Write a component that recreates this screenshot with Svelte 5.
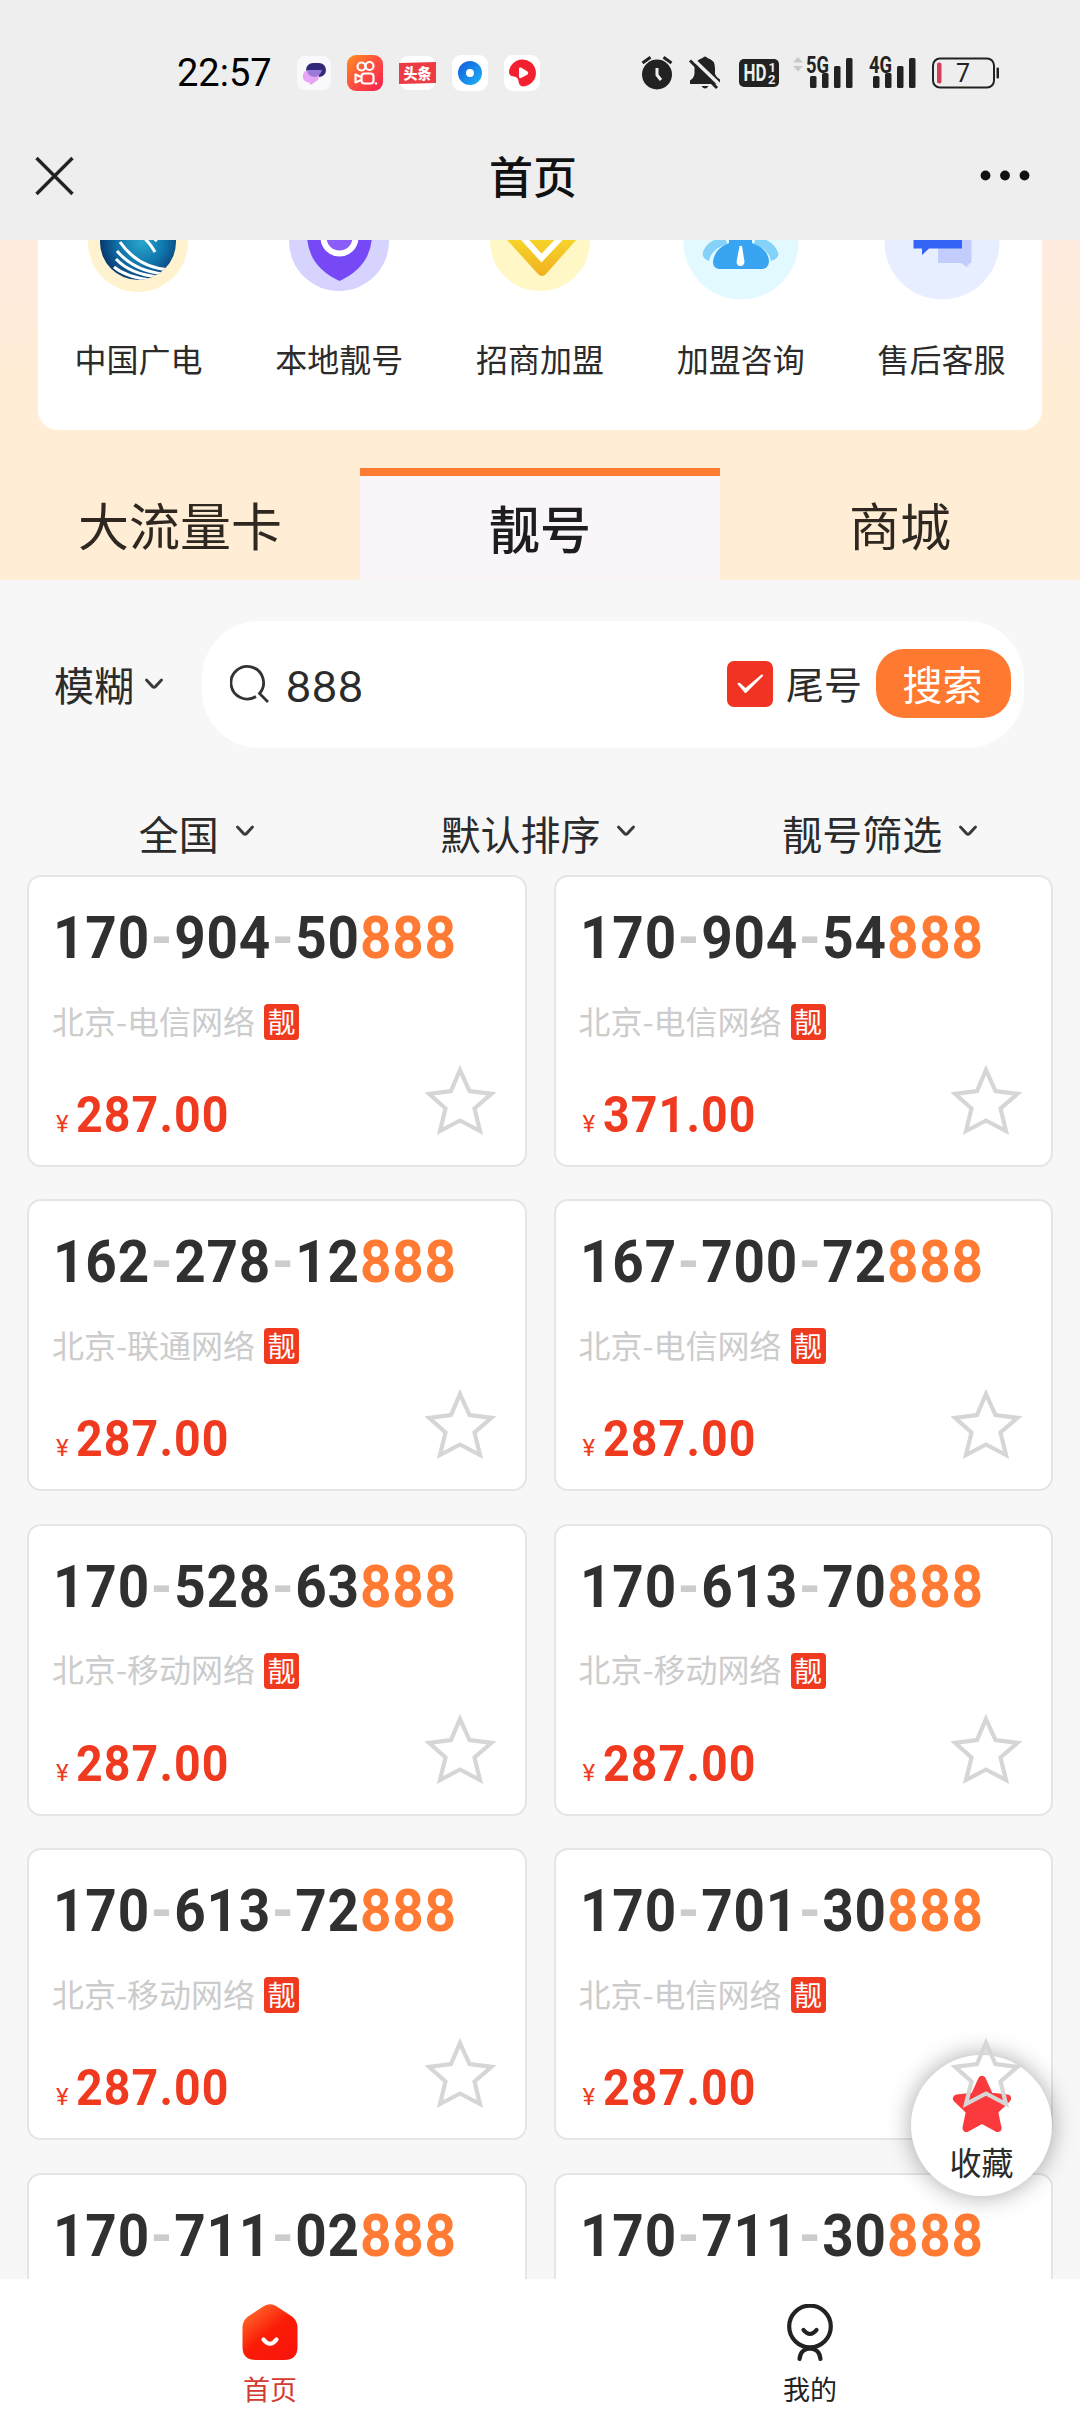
<script>
  const services = [
    { id: 'cbn', name: '中国广电' },
    { id: 'local', name: '本地靓号' },
    { id: 'join', name: '招商加盟' },
    { id: 'consult', name: '加盟咨询' },
    { id: 'support', name: '售后客服' }
  ];

  const filters = ['全国', '默认排序', '靓号筛选'];

  const numbers = [
    { parts: ['170', '904', '50'], carrier: '电信', price: '287.00' },
    { parts: ['170', '904', '54'], carrier: '电信', price: '371.00' },
    { parts: ['162', '278', '12'], carrier: '联通', price: '287.00' },
    { parts: ['167', '700', '72'], carrier: '电信', price: '287.00' },
    { parts: ['170', '528', '63'], carrier: '移动', price: '287.00' },
    { parts: ['170', '613', '70'], carrier: '移动', price: '287.00' },
    { parts: ['170', '613', '72'], carrier: '移动', price: '287.00' },
    { parts: ['170', '701', '30'], carrier: '电信', price: '287.00' },
    { parts: ['170', '711', '02'], carrier: '电信', price: '287.00' },
    { parts: ['170', '711', '30'], carrier: '电信', price: '287.00' }
  ];

  let keyword = '888';
</script>

{#snippet chevron()}
  <svg class="chevron" width="20" height="14" viewBox="0 0 20 14">
    <path d="M2.500 3 L8.600 9.600 Q10 10.800 11.400 9.600 L17.500 3" fill="none" stroke="#3a3a3a" stroke-width="2.900" stroke-linecap="round" />
  </svg>
{/snippet}

{#snippet signal(label)}
  <svg width="48" height="36" viewBox="0 0 48 36">
    <text x="0" y="17.500" class="net" textLength="23" lengthAdjust="spacingAndGlyphs">{label}</text>
    <g fill="#222">
      <rect x="4" y="21" width="6.500" height="12" rx="1.500" />
      <rect x="16" y="18" width="6.500" height="15" rx="1.500" />
      <rect x="28" y="11" width="6.500" height="22" rx="1.500" />
      <rect x="40" y="3" width="6.500" height="30" rx="1.500" />
    </g>
  </svg>
{/snippet}

<div class="phone">
  <header>
    <div class="status">
      <span class="time">22:57</span>
      <div class="apps">
        <svg width="34" height="36" viewBox="0 0 34 36">
          <rect x="0" y="1" width="34" height="34" rx="8" fill="#f9f8fb" />
          <rect x="9" y="8" width="20" height="14" rx="7" fill="#302a78" />
          <path d="M12 15 H18 A6.500 6.500 0 0 1 18 27 L14 30 L12 27.500 A6.200 6.200 0 0 1 12 15 Z" fill="#e7a6f5" />
          <path d="M12 15 H25 Q23 22 17 22 Q11 21 10 15.500 Z" fill="#9a79d8" />
        </svg>
        <svg width="36" height="36" viewBox="0 0 36 36">
          <defs>
            <linearGradient id="ks" x1="0" y1="0" x2="1" y2="1">
              <stop offset="0" stop-color="#ff8f1c" />
              <stop offset=".5" stop-color="#ff4e41" />
              <stop offset="1" stop-color="#f51f4d" />
            </linearGradient>
          </defs>
          <rect width="36" height="36" rx="9" fill="url(#ks)" />
          <g fill="none" stroke="#fff" stroke-width="2.200">
            <circle cx="14.500" cy="11.500" r="4" />
            <circle cx="22.500" cy="11" r="4" />
            <rect x="14.500" y="18.500" width="12" height="10" rx="3" />
            <path d="M14 22 L8.500 19.500 V27.500 L14 25" stroke-linejoin="round" />
          </g>
          <circle cx="29" cy="28.500" r="1.200" fill="#fff" />
        </svg>
        <svg width="37" height="36" viewBox="0 0 37 36">
          <rect x="1" y="1" width="35" height="34" rx="8" fill="#fff" />
          <path d="M0 8 L37 7 V28 L0 29 Z" fill="#ee3a43" />
          <text x="18.500" y="23.500" class="toutiao" textLength="28" lengthAdjust="spacingAndGlyphs">头条</text>
        </svg>
        <svg width="36" height="36" viewBox="0 0 36 36">
          <defs>
            <linearGradient id="br" x1="0" y1="0" x2="1" y2="1">
              <stop offset="0" stop-color="#1468e0" />
              <stop offset="1" stop-color="#1ba6f2" />
            </linearGradient>
          </defs>
          <rect width="36" height="36" rx="9" fill="#fff" />
          <circle cx="18" cy="18" r="8" fill="none" stroke="url(#br)" stroke-width="8" />
        </svg>
        <svg width="36" height="36" viewBox="0 0 36 36">
          <rect width="36" height="36" rx="9" fill="#fff" />
          <path d="M5 17 A13.500 13.500 0 1 1 22 31 Q15 33 14.500 26 Q14 22 10 21.500 Q5 21 5 17 Z" fill="#f3202f" />
          <path d="M15 13.500 Q15 12 17 12.600 L23.500 16.500 Q25 18 23.500 19.500 L17 23 Q15 23.500 15 22 Z" fill="#fff" />
        </svg>
      </div>
      <div class="indicators">
        <svg class="alarm" width="32" height="36" viewBox="0 0 32 36">
          <g stroke="#222" stroke-width="3" fill="none">
            <path d="M1.500 8 L9.500 2.200 M30.500 8 L22.500 2.200" />
          </g>
          <circle cx="16" cy="19.500" r="15" fill="#222" />
          <path d="M16 13 V20 L20 25" fill="none" stroke="#eee" stroke-width="3" />
        </svg>
        <svg class="bell" width="32" height="36" viewBox="0 0 32 36">
          <path d="M13.500 3 Q16 0 18.500 3 Q26 5 26 13 V19 Q27 22 31 24.500 V29 H1 V25.500 Q5.500 22.500 5.500 18 V13 Q6 5 13.500 3 Z" fill="#222" />
          <path d="M12.500 31 H19.500 Q16 36 12.500 31 Z" fill="#222" />
          <path d="M4 4 L32 31" stroke="#eee" stroke-width="3.500" />
          <path d="M1 5.500 L28 33" stroke="#222" stroke-width="3" />
        </svg>
        <svg class="hd" width="40" height="28" viewBox="0 0 40 28">
          <rect width="40" height="28" rx="5" fill="#222" />
          <text x="4.500" y="22" class="hd-text" textLength="23" lengthAdjust="spacingAndGlyphs">HD</text>
          <text x="29.500" y="13" class="hd-sub">1</text>
          <text x="29" y="25" class="hd-sub">2</text>
        </svg>
        <svg class="traffic" width="12" height="36" viewBox="0 0 12 36">
          <path d="M1 7.500 L6 2 L11 7.500 Z M1 11 H11 L6 16.500 Z" fill="#c9c9c9" />
        </svg>
        {@render signal('5G')}
        <span class="sim"></span>
        {@render signal('4G')}
        <svg class="battery" width="68" height="36" viewBox="0 0 68 36">
          <rect x="1" y="3.500" width="61" height="29" rx="7" fill="none" stroke="#222" stroke-width="2" />
          <rect x="64.500" y="12.500" width="2.500" height="11" rx="1" fill="#222" />
          <rect x="5" y="7.500" width="4.500" height="21" rx="2" fill="#d43f57" />
          <text x="31" y="27" class="battery-text">7</text>
        </svg>
      </div>
    </div>
    <div class="navbar">
      <svg width="40" height="40" viewBox="0 0 40 40">
        <path d="M2.500 2 L38.500 38 M38.500 2 L2.500 38" stroke="#222" stroke-width="3.400" />
      </svg>
      <h1>首页</h1>
      <svg width="50" height="12" viewBox="0 0 50 12">
        <circle cx="5.500" cy="5.500" r="4.900" fill="#111" />
        <circle cx="25" cy="5.500" r="4.900" fill="#111" />
        <circle cx="44.500" cy="5.500" r="4.900" fill="#111" />
      </svg>
    </div>
  </header>

  <main>
    <section class="hero">
      <div class="services">
        {#each services as service}
          <div class="service">
            <svg width="116" height="116" viewBox="0 0 116 116">
              {#if service.id === 'cbn'}
                <defs>
                  <radialGradient id="globe" cx=".55" cy=".5" r=".55">
                    <stop offset="0" stop-color="#2aa6cc" />
                    <stop offset=".55" stop-color="#0f75ab" />
                    <stop offset="1" stop-color="#08376f" />
                  </radialGradient>
                  <clipPath id="globe-clip"><circle cx="58" cy="58" r="38" /></clipPath>
                </defs>
                <circle cx="58" cy="58" r="50" fill="#fff3cf" />
                <circle cx="58" cy="58" r="38" fill="url(#globe)" />
                <g clip-path="url(#globe-clip)" fill="none" stroke="#fff" stroke-width="3">
                  <path d="M52 46 Q66 52 75 68 M66 48 L77 57" />
                  <path d="M40 58 Q58 84 90 86" />
                  <path d="M37 67 Q54 87 84 90" />
                  <path d="M36 75 Q50 90 78 93" />
                  <path d="M34 83 Q46 93 70 96" />
                </g>
              {:else if service.id === 'local'}
                <circle cx="58" cy="57" r="50" fill="#d6d3ff" />
                <path d="M26 50 Q26 82 58.500 97 Q91 82 91 50 Z" fill="#7748f6" />
                <circle cx="58.500" cy="53.500" r="16" fill="#8a5cf8" stroke="#fff" stroke-width="6" />
              {:else if service.id === 'join'}
                <defs>
                  <linearGradient id="gold" x1="0" y1="0" x2="0" y2="1">
                    <stop offset="0" stop-color="#f7de2e" />
                    <stop offset="1" stop-color="#f1b01f" />
                  </linearGradient>
                </defs>
                <circle cx="58" cy="57" r="50" fill="#fff8c6" />
                <path d="M16 46 L56 90 Q60 94 64 90 L103 46 Z" fill="url(#gold)" />
                <path d="M34 46 L59.500 74 L86 46" fill="none" stroke="#fff" stroke-width="6" />
              {:else if service.id === 'consult'}
                <circle cx="58" cy="58" r="57.500" fill="#e2f9ff" />
                <path d="M42 52 Q22 57 19.500 70 Q20 75 26 77 Q28 65 44 60 Z M73 52 Q92 57 95.500 70 Q95 75 88 77 Q86 65 71 60 Z" fill="#84d2f8" />
                <path d="M46 50 H69 V59 Q86 65 86 78 Q85 85 79 85 H36 Q30 84 30 78 Q31 65 46 59 Z" fill="#38a4f2" />
                <path d="M56.500 62 H59 L61.500 78 Q61 82 57.500 82 Q54 82 53.500 78 Z" fill="#fff" />
              {:else}
                <circle cx="58" cy="58" r="57.500" fill="#e6eeff" />
                <path d="M54 50 H87.500 V79 H86 L82.500 83 L77 79 H54 Z" fill="#c3cdfc" />
                <path d="M29.500 40 H78 V64.500 H45 L38 71 V64.500 H29.500 Z" fill="#3364f6" />
              {/if}
            </svg>
            <span>{service.name}</span>
          </div>
        {/each}
      </div>

      <div class="tabs">
        <div class="tab">大流量卡</div>
        <div class="tab active">靓号</div>
        <div class="tab">商城</div>
      </div>
    </section>

    <section class="search">
      <div class="mode">
        <span>模糊</span>
        {@render chevron()}
      </div>
      <div class="search-box">
        <svg width="40" height="40" viewBox="0 0 40 40">
          <path d="M26 32.500 A16.300 16.300 0 1 1 29.500 29.500 L38 38" fill="none" stroke="#333" stroke-width="2.800" />
        </svg>
        <span class="keyword">{keyword}</span>
        <span class="checkbox">
          <svg width="28" height="22" viewBox="0 0 28 22">
            <path d="M1.500 11 Q2 9 4 10 L9.500 15 L25.500 1.500 Q27.500 1 27 3 L10.500 19.500 Q9.500 20.500 8.500 19.500 Z" fill="#fff" />
          </svg>
        </span>
        <span class="tail">尾号</span>
        <button>搜索</button>
      </div>
    </section>

    <section class="filters">
      {#each filters as filter}
        <div class="filter">
          <span>{filter}</span>
          {@render chevron()}
        </div>
      {/each}
    </section>

    <section class="list">
      {#each numbers as item}
        <article>
          <div class="number">
            <span>{item.parts[0]}</span><i>-</i><span>{item.parts[1]}</span><i>-</i><span>{item.parts[2]}</span><span class="match">{keyword}</span>
          </div>
          <div class="carrier">
            <span>北京-{item.carrier}网络</span>
            <b>靓</b>
          </div>
          <div class="bottom">
            <div class="price"><small>¥</small><strong>{item.price}</strong></div>
            <svg class="star" width="72" height="72" viewBox="0 0 72 72">
              <path d="M35 6 L44.500 27 L66.500 29.800 L49.500 44.500 L55 67 L35 56.500 L15 67 L20.500 44.500 L4 29.800 L26 27 Z" fill="none" stroke="#d6d6d6" stroke-width="4.200" />
            </svg>
          </div>
        </article>
      {/each}
    </section>

    <div class="favorite">
      <svg width="60" height="58" viewBox="0 0 60 58">
        <path d="M30 5 L37.500 21.500 L55 23.500 L42 36 L45.500 53 L30 44.500 L14.500 53 L18 36 L5 23.500 L22.500 21.500 Z" fill="#fb3a3e" stroke="#fb3a3e" stroke-width="8" stroke-linejoin="round" />
      </svg>
      <span>收藏</span>
    </div>
  </main>

  <footer>
    <div class="item current">
      <svg width="56" height="58" viewBox="0 0 56 58">
        <defs>
          <linearGradient id="home" x1="0" y1="0" x2=".8" y2="1">
            <stop offset=".1" stop-color="#ff6a2c" />
            <stop offset=".55" stop-color="#fb1c06" />
            <stop offset="1" stop-color="#f8150c" />
          </linearGradient>
        </defs>
        <path d="M22 2 Q28 -1.500 34 2 L50 12.500 Q55.500 17 55.500 23 V43 Q55.500 56 42 56 H14 Q.5 56 .5 43 V23 Q.5 17 6 12.500 Z" fill="url(#home)" />
        <path d="M21.500 35.500 Q28 44 34.500 35.500" fill="none" stroke="#fff" stroke-width="4.200" stroke-linecap="round" />
      </svg>
      <span>首页</span>
    </div>
    <div class="item">
      <svg width="56" height="58" viewBox="0 0 56 58">
        <g fill="none" stroke="#222" stroke-width="4.200" stroke-linecap="round">
          <circle cx="28" cy="22.500" r="20.800" />
          <path d="M21.500 26 Q28 34 34.500 26" />
          <path d="M17.500 55 Q18.500 45 28 44.500 Q37.500 45 38.500 55" />
        </g>
      </svg>
      <span>我的</span>
    </div>
  </footer>
</div>

<style>
  :global(body) {
    margin: 0;
  }

  .phone {
    display: flex;
    flex-direction: column;
    width: 1080px;
    height: 2412px;
    overflow: hidden;
    background: #f7f7f7;
    color: #2b2b2b;
    font-family: 'Noto Sans CJK SC', sans-serif;
  }

  svg {
    display: block;
    flex-shrink: 0;
  }

  header {
    height: 240px;
    flex-shrink: 0;
    box-sizing: border-box;
    padding-top: 50px;
    background: #eee;
  }

  .status {
    display: flex;
    align-items: center;
    height: 46px;
    padding: 0 80px 0 177px;
  }

  .time {
    width: 120px;
    color: #000;
    font: 400 38px/46px Roboto, sans-serif;
  }

  .apps {
    display: flex;
    gap: 16px;
  }

  .indicators {
    display: flex;
    margin-left: auto;
  }

  .bell {
    margin-left: 16px;
  }

  .hd {
    margin: 4px 13px 0 18px;
  }

  .traffic {
    margin-right: 2px;
  }

  .sim {
    width: 15px;
  }

  .battery {
    margin-left: 15px;
  }

  .net {
    font: 700 23px Roboto, sans-serif;
    fill: #222;
  }

  .hd-text {
    font: 700 23px Roboto, sans-serif;
    fill: #eee;
  }

  .hd-sub {
    font: 700 13px Roboto, sans-serif;
    fill: #eee;
  }

  .battery-text {
    font: 400 25px Roboto, sans-serif;
    text-anchor: middle;
    fill: #222;
  }

  .toutiao {
    font: 900 15px 'Noto Sans CJK SC', sans-serif;
    text-anchor: middle;
    fill: #fff;
  }

  .navbar {
    display: flex;
    align-items: center;
    justify-content: space-between;
    height: 72px;
    margin-top: 44px;
    padding: 0 50px 0 34px;
  }

  h1 {
    margin: 0 0 3px 12px;
    color: #111;
    font-size: 44px;
    font-weight: 500;
    line-height: 64px;
  }

  main {
    position: relative;
    flex: 1;
    min-height: 0;
    overflow: hidden;
  }

  .hero {
    height: 340px;
    display: flex;
    flex-direction: column;
    justify-content: space-between;
    background: linear-gradient(#ffeadf, #ffedd5 150px);
  }

  .services {
    display: grid;
    grid-template-columns: repeat(5, 1fr);
    height: 246px;
    box-sizing: border-box;
    margin: -56px 38px 0;
    border-radius: 0 0 20px 20px;
    background: #fff;
  }

  .service {
    display: flex;
    flex-direction: column;
    align-items: center;
    gap: 35px;
    font-size: 32px;
    line-height: 46px;
  }

  .tabs {
    display: grid;
    grid-template-columns: repeat(3, 1fr);
    height: 112px;
  }

  .tab {
    color: #2f2820;
    font-size: 51px;
    line-height: 112px;
    text-align: center;
  }

  .tab.active {
    border-top: 8px solid #ff7a33;
    background: #f9f5f9;
    color: #1d1d1f;
    font-weight: 500;
    line-height: 103px;
  }

  .search {
    display: flex;
    align-items: center;
    padding: 41px 56px 0 54px;
  }

  .mode {
    display: flex;
    align-items: center;
    gap: 10px;
    width: 148px;
    font-size: 40px;
    line-height: 60px;
    margin-top: -2px;
  }

  .search-box {
    display: flex;
    align-items: center;
    flex: 1;
    height: 127px;
    box-sizing: border-box;
    padding: 0 13px 2px 28px;
    border-radius: 57px;
    background: #fff;
  }

  .keyword {
    flex: 1;
    margin: 3px 0 0 16px;
    font-family: Lato, sans-serif;
    font-size: 43px;
    letter-spacing: 1px;
  }

  .checkbox {
    display: grid;
    place-items: center;
    width: 46px;
    height: 46px;
    border-radius: 7px;
    background: #f03323;
  }

  .tail {
    margin: -2px 14px 0 13px;
    font-size: 38px;
    line-height: 58px;
  }

  button {
    width: 135px;
    height: 69px;
    padding: 0 2px 2px 0;
    border: 0;
    border-radius: 28px;
    background: #ff7a30;
    color: #fff;
    font: 400 40px/60px 'Noto Sans CJK SC', sans-serif;
  }

  .filters {
    display: grid;
    grid-template-columns: repeat(3, 1fr);
    height: 127px;
    box-sizing: border-box;
    padding: 55px 29px 0 26px;
  }

  .filter {
    display: flex;
    align-items: center;
    justify-content: center;
    gap: 16px;
    height: 60px;
    font-size: 40px;
    line-height: 60px;
  }

  .filter .chevron {
    margin-top: -4px;
  }

  .list {
    display: grid;
    grid-template-columns: 1fr 1fr;
    gap: 32.400px 27px;
    padding: 0 27px;
  }

  article {
    height: 292px;
    box-sizing: border-box;
    padding: 31px 28px 0 24px;
    border: 2px solid #e5e5e5;
    border-radius: 14px;
    background: #fff;
  }

  /* tall narrow numerals */
  .number {
    display: flex;
    width: max-content;
    height: 60px;
    color: #303030;
    font: 700 59px/60px Roboto, sans-serif;
    letter-spacing: .9px;
    transform: scaleX(.93);
    transform-origin: left;
  }

  .number i {
    width: 26px;
    color: #ccc;
    font-style: normal;
    text-align: center;
  }

  .number .match {
    color: #ff7a33;
  }

  .carrier {
    display: flex;
    align-items: center;
    gap: 9px;
    height: 36px;
    margin: 36px 0 0 -1px;
    color: #ccc;
    font-size: 32px;
  }

  .carrier span {
    line-height: 36px;
    padding-bottom: 5px;
  }

  .carrier b {
    width: 35px;
    height: 36px;
    border-radius: 4px;
    background: #f03a20;
    color: #fff;
    font-size: 28px;
    font-weight: 400;
    line-height: 34px;
    text-align: center;
  }

  .bottom {
    display: flex;
    justify-content: space-between;
    margin-top: 24px;
  }

  .price {
    display: flex;
    align-items: baseline;
    margin-top: 21px;
    padding-left: 3px;
    color: #f03a20;
    font-family: Roboto, sans-serif;
    line-height: 60px;
  }

  .price small {
    width: 20px;
    font-size: 24px;
  }

  .price strong {
    font-size: 50px;
    letter-spacing: 1.200px;
    transform: scaleX(.93);
    transform-origin: left;
  }

  .star {
    position: relative;
    z-index: 2;
  }

  .favorite {
    position: absolute;
    z-index: 1;
    right: 28px;
    bottom: 83px;
    display: flex;
    flex-direction: column;
    align-items: center;
    width: 141px;
    height: 141px;
    box-sizing: border-box;
    padding-top: 20px;
    border-radius: 50%;
    background: #fff;
    box-shadow: 0 0 24px rgba(0, 0, 0, .35);
    font-size: 32px;
    line-height: 56px;
  }

  footer {
    display: grid;
    grid-template-columns: 1fr 1fr;
    flex-shrink: 0;
    height: 133px;
    background: #fff;
  }

  .item {
    display: flex;
    flex-direction: column;
    align-items: center;
    gap: 9px;
    padding-top: 25px;
    color: #222;
    font-size: 27px;
    line-height: 36px;
  }

  .item.current {
    color: #d53a30;
  }
</style>
